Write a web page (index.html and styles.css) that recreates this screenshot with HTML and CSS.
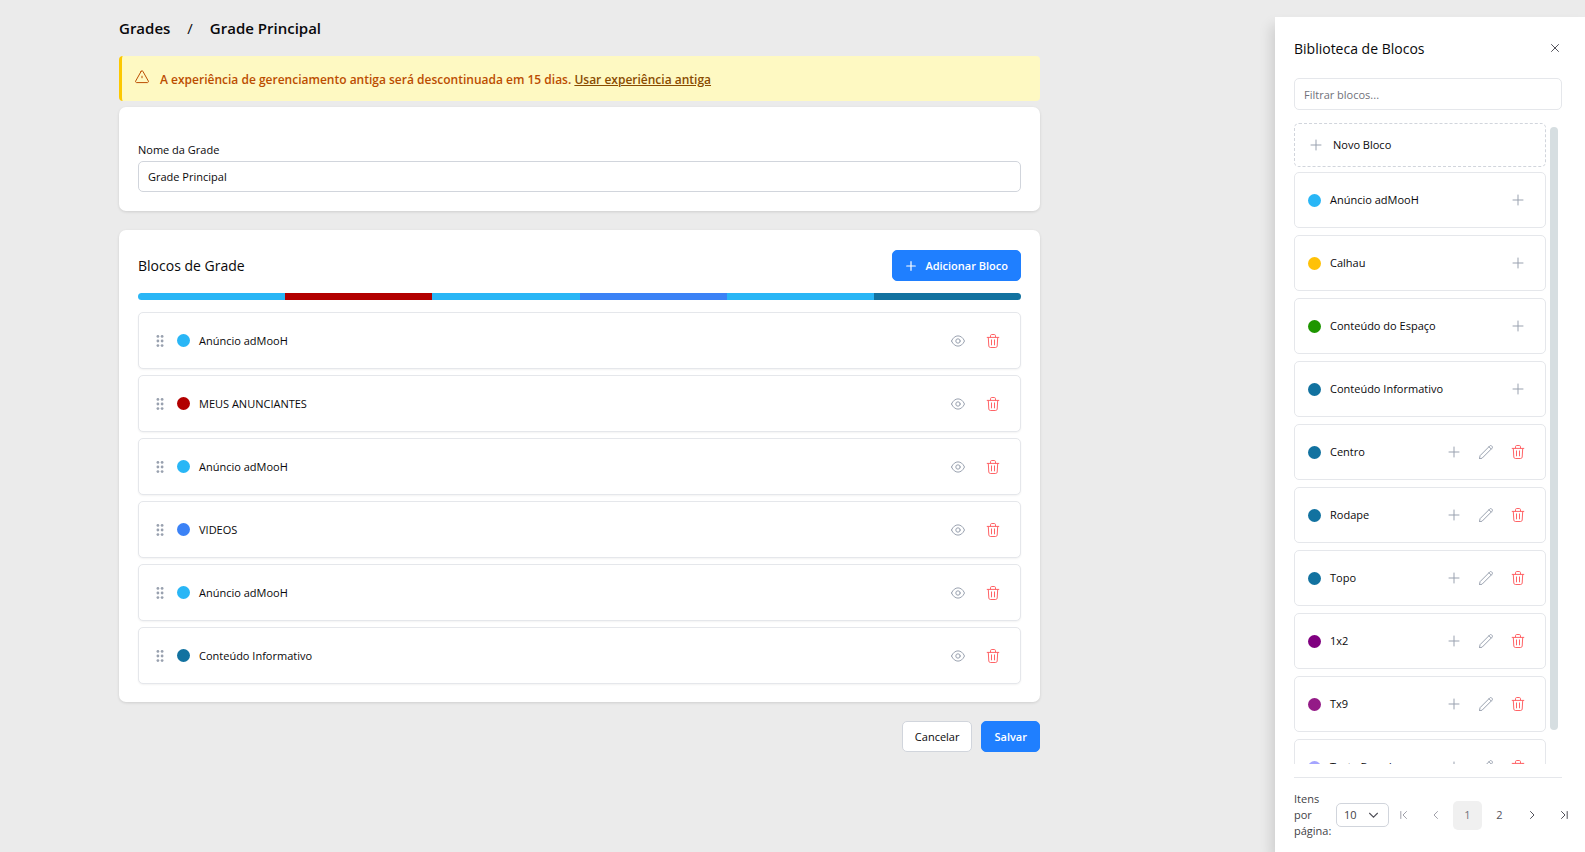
FILE: index.html
```html
<!DOCTYPE html>
<html lang="pt-BR">
<head>
    <meta charset="UTF-8">
    <meta name="viewport" content="width=device-width, initial-scale=1.0">
    <title>Grade Principal</title>
    <link rel="stylesheet" href="styles.css">
</head>
<body>
    <!-- Icons shared by the lists -->
    <svg class="sprite" aria-hidden="true">
        <symbol id="i-plus" viewBox="0 0 14 14"><path d="M7 2v10M2 7h10"/></symbol>
        <symbol id="i-grip" viewBox="0 0 14 14"><g fill="currentColor" stroke="none"><circle cx="4.9" cy="2.4" r="1.4"/><circle cx="9.1" cy="2.4" r="1.4"/><circle cx="4.9" cy="7" r="1.4"/><circle cx="9.1" cy="7" r="1.4"/><circle cx="4.9" cy="11.6" r="1.4"/><circle cx="9.1" cy="11.6" r="1.4"/></g></symbol>
        <symbol id="i-eye" viewBox="0 0 14 14"><path d="M.5 7C2 3.600 4.400 1.900 7 1.900S12 3.600 13.500 7C12 10.400 9.600 12.100 7 12.100S2 10.400.5 7z"/><circle cx="7" cy="7" r="2.200"/></symbol>
        <symbol id="i-trash" viewBox="0 0 14 14"><path d="M1.200 3.400h11.600M4.500 3.200V1.700c0-.7.500-1.200 1.200-1.200h2.600c.7 0 1.200.5 1.200 1.200v1.500M2.300 3.500l.5 8.600c.1.800.7 1.400 1.500 1.400h5.400c.8 0 1.400-.6 1.500-1.400l.5-8.600M5.500 5.900v5M8.500 5.900v5"/></symbol>
        <symbol id="i-pencil" viewBox="0 0 14 14"><path d="M.5 13.500l.6-2.900L10.800.9c.6-.6 1.300-.5 1.800 0l.5.5c.5.5.5 1.200 0 1.800L3.400 12.900zM10 1.800L12.200 4"/></symbol>
    </svg>

    <main class="main">
        <nav class="breadcrumb">
            <a href="#">Grades</a>
            <span class="slash">/</span>
            <span>Grade Principal</span>
        </nav>

        <div class="alert">
            <svg class="icon" viewBox="0 0 14 14"><path d="M6.200 1.200L.7 11c-.4.800.1 1.600.9 1.600h10.800c.8 0 1.300-.8.9-1.600L7.800 1.200c-.4-.6-1.200-.6-1.600 0z"/><path d="M7 6.200v1.600"/></svg>
            <p>A experiência de gerenciamento antiga será descontinuada em 15 dias. <a href="#">Usar experiência antiga</a></p>
        </div>

        <section class="card name-card">
            <label for="nome">Nome da Grade</label>
            <input type="text" id="nome" class="field" value="Grade Principal">
        </section>

        <section class="card">
            <div class="card-header">
                <h2>Blocos de Grade</h2>
                <button type="button" class="btn primary"><svg class="icon small"><use href="#i-plus"/></svg>Adicionar Bloco</button>
            </div>
            <div class="bar">
                <span class="sky"></span><span class="red"></span><span class="sky"></span><span class="blue"></span><span class="sky"></span><span class="teal"></span>
            </div>
            <ul class="blocks" id="blocks"></ul>
        </section>

        <div class="actions">
            <button type="button" class="btn">Cancelar</button>
            <button type="button" class="btn primary">Salvar</button>
        </div>
    </main>

    <aside class="library">
        <div class="library-header">
            <h2>Biblioteca de Blocos</h2>
            <button type="button" class="close" aria-label="Fechar"><svg viewBox="0 0 8 8"><path d="M.5.5l7 7M7.500.5l-7 7"/></svg></button>
        </div>
        <input type="text" class="field filter" placeholder="Filtrar blocos..." aria-label="Filtrar blocos">

        <div class="library-body">
            <div class="library-scroll">
                <button type="button" class="new-block"><svg class="icon"><use href="#i-plus"/></svg>Novo Bloco</button>
                <ul class="blocks" id="library"></ul>
            </div>
            <div class="scroll-thumb"></div>
        </div>

        <div class="paginator">
            <label for="per-page">Itens por página:</label>
            <select id="per-page">
                <option>10</option>
                <option>20</option>
            </select>
            <div class="pages">
                <button type="button" disabled aria-label="Primeira página"><svg viewBox="0 0 8 8"><path d="M.8.5v7M6.500.5L3 4l3.500 3.500"/></svg></button>
                <button type="button" disabled aria-label="Página anterior"><svg viewBox="0 0 8 8"><path d="M5.500.5L2 4l3.500 3.500"/></svg></button>
                <button type="button" class="current">1</button>
                <button type="button">2</button>
                <button type="button" aria-label="Próxima página"><svg viewBox="0 0 8 8"><path d="M2.500.5L6 4 2.500 7.500"/></svg></button>
                <button type="button" aria-label="Última página"><svg viewBox="0 0 8 8"><path d="M1.500.5L5 4 1.500 7.500M7.200.5v7"/></svg></button>
            </div>
        </div>
    </aside>

    <script>
        const gridBlocks = [
            ['Anúncio adMooH', 'sky'],
            ['MEUS ANUNCIANTES', 'red'],
            ['Anúncio adMooH', 'sky'],
            ['VIDEOS', 'blue'],
            ['Anúncio adMooH', 'sky'],
            ['Conteúdo Informativo', 'teal']
        ];

        // third value: the block can be edited and removed
        const libraryBlocks = [
            ['Anúncio adMooH', 'sky', false],
            ['Calhau', 'yellow', false],
            ['Conteúdo do Espaço', 'green', false],
            ['Conteúdo Informativo', 'teal', false],
            ['Centro', 'teal', true],
            ['Rodape', 'teal', true],
            ['Topo', 'teal', true],
            ['1x2', 'purple', true],
            ['Tx9', 'magenta', true],
            ['Teste Brenda', 'lilac', true]
        ];

        function iconButton(name, label) {
            return `<button type="button" class="icon-btn ${name}" aria-label="${label}"><svg class="icon"><use href="#i-${name}"/></svg></button>`;
        }

        document.getElementById('blocks').innerHTML = gridBlocks.map(([name, color]) => `
            <li class="block">
                <svg class="icon grip"><use href="#i-grip"/></svg>
                <span class="dot ${color}"></span>
                <span class="name">${name}</span>
                ${iconButton('eye', 'Ver')}
                ${iconButton('trash', 'Remover')}
            </li>`).join('');

        document.getElementById('library').innerHTML = libraryBlocks.map(([name, color, editable]) => `
            <li class="block">
                <span class="dot ${color}"></span>
                <span class="name">${name}</span>
                ${iconButton('plus', 'Adicionar')}
                ${editable ? iconButton('pencil', 'Editar') + iconButton('trash', 'Remover') : ''}
            </li>`).join('');
    </script>
</body>
</html>
```
FILE: styles.css
```css
* {
    box-sizing: border-box;
}
body {
    margin: 0;
    min-height: 100vh;
    display: flex;
    align-items: flex-start;
    background: #ebebeb;
    color: #09090b;
    font-family: "Open Sans", "Noto Sans", sans-serif;
    font-size: 11px;
    line-height: 16px;
}
h2, p, ul {
    margin: 0;
    padding: 0;
}
h2 {
    font-size: 14px;
    font-weight: 500;
    line-height: 20px;
}
button, input, select {
    font: inherit;
    color: inherit;
}
button {
    cursor: pointer;
}
svg {
    display: block;
    fill: none;
    stroke: currentColor;
    stroke-linecap: round;
    stroke-linejoin: round;
}
.sprite {
    position: absolute;
    width: 0;
    height: 0;
}
.icon {
    width: 14px;
    height: 14px;
    flex: none;
}
.icon.small {
    width: 12px;
    height: 12px;
    stroke-width: 1.4;
}

/* Main column */
.main {
    flex: 1;
    min-width: 0;
    padding: 16px 235px 16px 119px;
}
.breadcrumb {
    display: flex;
    gap: 17px;
    font-size: 15px;
    font-weight: 600;
    line-height: 24px;
}
.breadcrumb a {
    color: inherit;
    text-decoration: none;
}
.slash {
    font-weight: 400;
}
.alert {
    display: flex;
    gap: 11px;
    margin: 16px 0 6px;
    padding: 14px 13px 12px;
    border-left: 3px solid #fcc800;
    border-radius: 4px;
    background: #fef9c2;
    color: #bb4d00;
    font-size: 12px;
    font-weight: 600;
    line-height: 19px;
}
.alert a {
    color: #894b00;
}
.card {
    margin-bottom: 19px;
    padding: 20px 19px 18px;
    border-radius: 7px;
    background: #fff;
    box-shadow: 0 1px 3px rgba(0, 0, 0, 0.12);
}
.name-card {
    padding-top: 35px;
    padding-bottom: 19px;
}
.name-card label {
    display: block;
    margin-bottom: 3px;
    font-weight: 500;
}
.field {
    display: block;
    width: 100%;
    height: 31px;
    padding: 0 9px;
    border: 1px solid #d1d5dc;
    border-radius: 5px;
    background: #fff;
}
.card-header {
    display: flex;
    align-items: center;
    justify-content: space-between;
}
.btn {
    display: flex;
    align-items: center;
    gap: 8px;
    height: 31px;
    padding: 0 12px;
    border: 1px solid #d1d5dc;
    border-radius: 5px;
    background: #fff;
    font-weight: 500;
}
.btn.primary {
    border-color: #1f7fff;
    background: #1f7fff;
    color: #fff;
    font-weight: 600;
}
.bar {
    display: flex;
    height: 7px;
    margin: 12px 0;
    border-radius: 4px;
    overflow: hidden;
}
.bar span {
    flex: 1;
}
.actions {
    display: flex;
    justify-content: flex-end;
    gap: 9px;
}

/* Block rows */
.blocks {
    display: grid;
    gap: 6px;
    list-style: none;
}
.block {
    display: flex;
    align-items: center;
    height: 57px;
    padding: 0 13px;
    border: 1px solid #e5e7eb;
    border-radius: 5px;
    background: #fff;
    box-shadow: 0 1px 2px rgba(0, 0, 0, 0.05);
}
.grip {
    margin: 0 10px 0 1px;
    color: #99a1af;
}
.dot {
    flex: none;
    width: 13px;
    height: 13px;
    margin-right: 9px;
    border-radius: 50%;
}
.name {
    flex: 1;
    font-weight: 500;
}
.icon-btn {
    display: flex;
    align-items: center;
    justify-content: center;
    width: 28px;
    height: 28px;
    margin-left: 7px;
    padding: 0;
    border: 0;
    background: none;
    color: #99a1af;
}
.icon-btn.trash {
    color: #ff6467;
}
.sky { background: #29b6f6; }
.red { background: #b20000; }
.blue { background: #3b82f6; }
.teal { background: #1272a0; }
.yellow { background: #ffc107; }
.green { background: #1e9600; }
.purple { background: #800080; }
.magenta { background: #941b87; }
.lilac { background: #a5a5ff; }

/* Block library */
.library {
    display: flex;
    flex-direction: column;
    width: 310px;
    height: calc(100vh - 17px);
    margin-top: 17px;
    padding: 19px 23px 13px 19px;
    background: #fff;
    box-shadow: -4px 8px 12px rgba(0, 0, 0, 0.12);
}
.library-header {
    display: flex;
    justify-content: space-between;
    margin: 3px 0 19px;
}
.close {
    width: 14px;
    height: 18px;
    padding: 3px;
    border: 0;
    background: none;
    color: #52525b;
}
.close svg {
    width: 8px;
    height: 8px;
}
.filter {
    flex: none;
    height: 32px;
    border-color: #e5e7eb;
}
.filter::placeholder {
    color: #71717a;
}
.library-body {
    position: relative;
    flex: 1;
    min-height: 0;
    margin: 13px 0;
}
.library-scroll {
    height: 100%;
    padding-right: 16px;
    overflow: hidden;
}
.scroll-thumb {
    position: absolute;
    top: 4px;
    right: 4px;
    width: 8px;
    height: 94%;
    border-radius: 4px;
    background: #d6dee1;
}
.new-block {
    display: flex;
    align-items: center;
    gap: 10px;
    width: 100%;
    height: 44px;
    margin-bottom: 5px;
    padding: 0 14px;
    border: 1px dashed #d1d5dc;
    border-radius: 5px;
    background: #fff;
    font-weight: 500;
}
.new-block .icon {
    color: #99a1af;
}
.library .blocks {
    gap: 7px;
}
.library .block {
    height: 56px;
    box-shadow: none;
}
.library .icon-btn {
    margin-left: 4px;
}
.paginator {
    display: flex;
    align-items: center;
    margin-right: -23px;
    padding-top: 14px;
    background: linear-gradient(#e5e7eb, #e5e7eb) no-repeat 0 0 / calc(100% - 23px) 1px;
    color: #3f3f46;
}
.paginator label {
    width: 38px;
    margin-right: 4px;
}
.paginator select {
    width: 53px;
    height: 24px;
    padding: 0 7px;
    border: 1px solid #d1d5dc;
    border-radius: 5px;
    appearance: none;
    background: #fff url("data:image/svg+xml,%3Csvg xmlns='http://www.w3.org/2000/svg' viewBox='0 0 8 8' fill='none' stroke='%2352525b' stroke-linecap='round'%3E%3Cpath d='M.5 2L4 5.500 7.500 2'/%3E%3C/svg%3E") no-repeat right 10px center / 9px 9px;
}
.pages {
    display: flex;
    gap: 3px;
}
.pages button {
    display: flex;
    align-items: center;
    justify-content: center;
    width: 29px;
    height: 29px;
    padding: 0;
    border: 0;
    border-radius: 5px;
    background: none;
    color: #52525b;
}
.pages button:disabled {
    color: #a1a1aa;
}
.pages .current {
    background: #f0f0f0;
    color: #71717a;
}
.pages svg {
    width: 8px;
    height: 8px;
}
```
